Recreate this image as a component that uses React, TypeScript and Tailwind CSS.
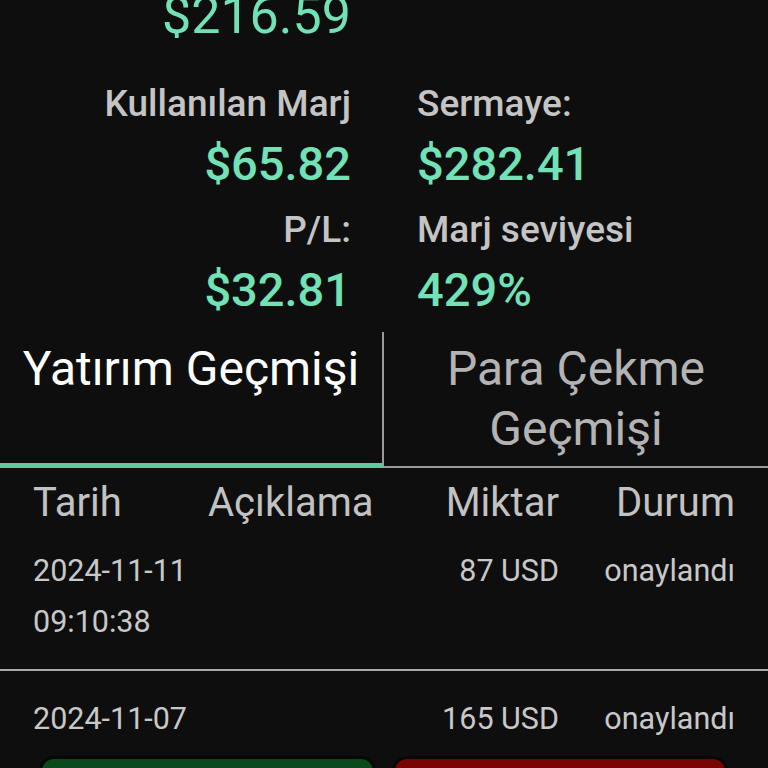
import React from 'react'

const stats = [
  { left: { label: 'Kullanılan Marj', value: '$65.82' }, right: { label: 'Sermaye:', value: '$282.41' } },
  { left: { label: 'P/L:', value: '$32.81' }, right: { label: 'Marj seviyesi', value: '429%' } },
]

const rows = [
  { date: '2024-11-11', time: '09:10:38', desc: '', amount: '87 USD', status: 'onaylandı' },
  { date: '2024-11-07', time: '', desc: '', amount: '165 USD', status: 'onaylandı' },
]

export default function App() {
  return (
    <div
      className="h-[768px] overflow-hidden bg-[#0e0e0e]"
      style={{ fontFamily: 'Roboto, "Liberation Sans", sans-serif' }}
    >
      {/* Account summary */}
      <div className="mt-[-20px] flex flex-col">
        <div className="grid grid-cols-2 gap-x-[66px]">
          <div className="text-right text-[52px] leading-[72px] text-[#72e2b6]">$216.59</div>
          <div />
        </div>

        <div className="mt-[23px] flex flex-col gap-[7px]">
          {stats.map((pair, i) => (
            <div key={i} className="grid grid-cols-2 gap-x-[66px]">
              <div className="flex flex-col items-end">
                <span className="text-[37px] leading-[58px] font-medium text-[#c4c4c4]">{pair.left.label}</span>
                <span className="text-[47px] leading-[61px] font-medium text-[#72e2b6]">{pair.left.value}</span>
              </div>
              <div className="flex flex-col items-start">
                <span className="text-[37px] leading-[58px] font-medium text-[#c4c4c4]">{pair.right.label}</span>
                <span className="text-[47px] leading-[61px] font-medium text-[#72e2b6]">{pair.right.value}</span>
              </div>
            </div>
          ))}
        </div>
      </div>

      {/* Tabs */}
      <div className="mt-[12px] flex">
        <div className="w-[384px] border-r-2 border-b-[5px] border-r-[#9a9a9a] border-b-[#5fc9a1] pt-[7px] text-center text-[48px] leading-[60px] text-white">
          Yatırım Geçmişi
        </div>
        <div className="flex-1 border-b-2 border-[#9a9a9a] pt-[7px] pb-[7px] text-center text-[48px] leading-[60px] text-[#b3b3b3]">
          Para Çekme
          <br />
          Geçmişi
        </div>
      </div>

      {/* Table */}
      <div className="px-[33px]">
        <div className="grid grid-cols-[175px_190px_161px_176px] pt-[7px] text-[40px] leading-[56px] text-[#c2c2c2]">
          <div>Tarih</div>
          <div>Açıklama</div>
          <div className="text-right">Miktar</div>
          <div className="text-right">Durum</div>
        </div>
      </div>

      {rows.map((row, i) => (
        <div
          key={row.date}
          className={`px-[33px] ${i === 0 ? 'pt-[14px] pb-[22px] border-b-2 border-[#a8a8a8]' : 'pt-[22px] pb-[15px]'}`}
        >
          <div className="grid grid-cols-[175px_190px_161px_176px] text-[30.5px] leading-[51px] text-[#c8c8c8]">
            <div>
              <div>{row.date}</div>
              {row.time && <div>{row.time}</div>}
            </div>
            <div>{row.desc}</div>
            <div className="text-right">{row.amount}</div>
            <div className="text-right">{row.status}</div>
          </div>
        </div>
      ))}

      {/* Actions */}
      <div className="flex gap-[22px] pl-[42px] pr-[43px]">
        <button className="h-[60px] flex-1 rounded-[12px] bg-[#0b4a1c] shadow-[0_0_0_3px_#070707]" />
        <button className="h-[60px] flex-1 rounded-[12px] bg-[#780404] shadow-[0_0_0_3px_#070707]" />
      </div>
    </div>
  )
}
